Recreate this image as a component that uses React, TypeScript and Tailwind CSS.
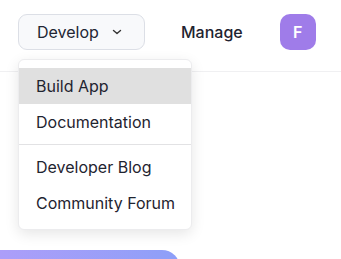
import React from "react";

export default function App() {
  return (
    <div
      className="relative w-[341px] h-[259px] overflow-hidden bg-white text-[#1f2430]"
      style={{ fontFamily: "Inter, 'Noto Sans', sans-serif" }}
    >
      <header className="h-[72px] border-b border-[#f0f0f2] flex items-start pt-[14px] pl-[18px]">
        <button className="h-[36px] w-[127px] rounded-[9px] border border-[#dcdfe6] bg-[#f8f9fb] flex items-center pl-[18px] text-[16px] text-[#222633]">
          <span>Develop</span>
          <svg
            className="ml-[13px]"
            width="10"
            height="6"
            viewBox="0 0 10 6"
            fill="none"
            stroke="#333"
            strokeWidth="1.4"
            strokeLinecap="round"
            strokeLinejoin="round"
          >
            <path d="M1.5 1.5 L5 4.5 L8.5 1.5" />
          </svg>
        </button>
        <span className="ml-[36px] h-[36px] flex items-center text-[16px] font-medium text-[#1f2430]">Manage</span>
        <div className="ml-[37px] w-[36px] h-[36px] rounded-[10px] bg-[#9f7ce9] flex items-center justify-center text-white text-[16px] font-semibold">
          F
        </div>
      </header>

      <div className="absolute left-[18px] top-[59px] w-[174px] rounded-[6px] border border-[#ececee] bg-white py-[8px] shadow-[0_4px_14px_rgba(0,0,0,0.10)] text-[16px] text-[#1f2430]">
        <div className="h-[36px] flex items-center pl-[17px] bg-[#e0e0e0]">Build App</div>
        <div className="h-[36px] flex items-center pl-[17px]">Documentation</div>
        <div className="my-[4px] h-px bg-[#e2e2e4]" />
        <div className="h-[36px] flex items-center pl-[17px]">Developer Blog</div>
        <div className="h-[36px] flex items-center pl-[17px]">Community Forum</div>
      </div>

      <div className="absolute left-0 top-[250px] w-[180px] h-[30px] rounded-tr-[18px] bg-gradient-to-r from-[#ac9ef9] to-[#8d9ff8]" />
    </div>
  );
}
